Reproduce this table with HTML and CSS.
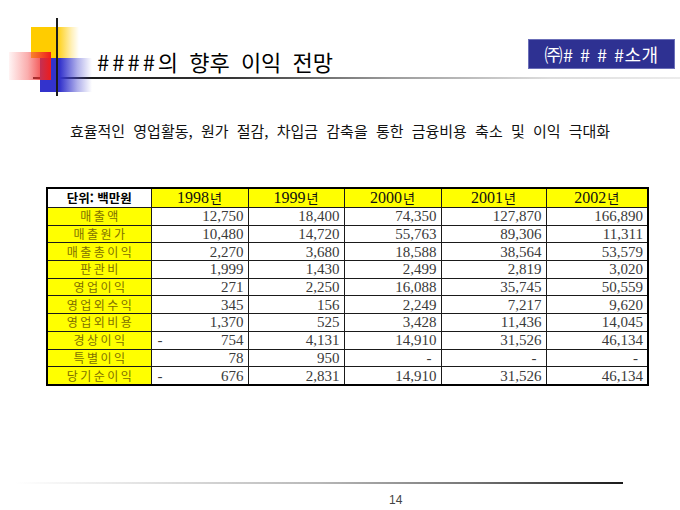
FILE: index.html
```html
<!DOCTYPE html>
<html lang="ko">
<head>
<meta charset="utf-8">
<title>####의 향후 이익 전망</title>
<link rel="stylesheet" href="styles.css">
</head>
<body>
<div class="slide">
  <header class="header">
    <div class="logo">
      <span class="sq sq-yellow"></span>
      <span class="sq sq-blue"></span>
      <span class="sq sq-red"></span>
      <span class="logo-vline"></span>
    </div>
    <div class="title-row">
      <h1 class="title"><span class="hashes">####</span>의 향후 이익 전망</h1>
      <div class="badge">㈜# # # #소개</div>
    </div>
    <div class="title-rule"></div>
  </header>

  <p class="subtitle">효율적인 영업활동, 원가 절감, 차입금 감축을 통한 금융비용 축소 및 이익 극대화</p>

  <table class="fin">
    <colgroup>
      <col class="c-label">
      <col class="c-98">
      <col class="c-99">
      <col class="c-00">
      <col class="c-01">
      <col class="c-02">
    </colgroup>
    <thead>
      <tr>
        <th class="unit">단위: 백만원</th>
        <th class="year">1998<span class="nyeon">년</span></th>
        <th class="year">1999<span class="nyeon">년</span></th>
        <th class="year">2000<span class="nyeon">년</span></th>
        <th class="year">2001<span class="nyeon">년</span></th>
        <th class="year">2002<span class="nyeon">년</span></th>
      </tr>
    </thead>
    <tbody>
      <tr><th>매출액</th><td>12,750</td><td>18,400</td><td>74,350</td><td>127,870</td><td>166,890</td></tr>
      <tr><th>매출원가</th><td>10,480</td><td>14,720</td><td>55,763</td><td>89,306</td><td>11,311</td></tr>
      <tr><th>매출총이익</th><td>2,270</td><td>3,680</td><td>18,588</td><td>38,564</td><td>53,579</td></tr>
      <tr><th>판관비</th><td>1,999</td><td>1,430</td><td>2,499</td><td>2,819</td><td>3,020</td></tr>
      <tr><th>영업이익</th><td>271</td><td>2,250</td><td>16,088</td><td>35,745</td><td>50,559</td></tr>
      <tr><th>영업외수익</th><td>345</td><td>156</td><td>2,249</td><td>7,217</td><td>9,620</td></tr>
      <tr><th>영업외비용</th><td>1,370</td><td>525</td><td>3,428</td><td>11,436</td><td>14,045</td></tr>
      <tr><th>경상이익</th><td><span class="neg">-</span>754</td><td>4,131</td><td>14,910</td><td>31,526</td><td>46,134</td></tr>
      <tr><th>특별이익</th><td>78</td><td>950</td><td class="dash">-</td><td class="dash">-</td><td class="dash">-</td></tr>
      <tr><th>당기순이익</th><td><span class="neg">-</span>676</td><td>2,831</td><td>14,910</td><td>31,526</td><td>46,134</td></tr>
    </tbody>
  </table>

  <footer class="footer">
    <div class="footer-rule"></div>
    <div class="page-num">14</div>
  </footer>
</div>
</body>
</html>
```
FILE: styles.css
```css
html, body {
  margin: 0;
  padding: 0;
  background: #ffffff;
}

.slide {
  width: 680px;
  height: 510px;
  display: flex;
  flex-direction: column;
  overflow: hidden;
  font-family: "Noto Sans CJK KR", "Noto Sans", sans-serif;
  color: #111;
}

/* ---------- header ---------- */
.header {
  position: relative;
  height: 80px;
  flex: none;
}

.logo {
  position: absolute;
  left: 0;
  top: 0;
  width: 100px;
  height: 100px;
}

.sq {
  position: absolute;
  display: block;
}

.sq-yellow {
  left: 31px;
  top: 27px;
  width: 48px;
  height: 31px;
  background: linear-gradient(to right, #ffcc00 0%, #ffcc00 52%, rgba(255, 214, 60, 0.35) 85%, rgba(255, 230, 120, 0) 100%);
}

.sq-blue {
  left: 40px;
  top: 58px;
  width: 52px;
  height: 34px;
  background: linear-gradient(to right, #3333cc 0%, #3333cc 38%, rgba(80, 80, 210, 0.45) 72%, rgba(120, 120, 230, 0) 100%);
}

.sq-red {
  left: 9px;
  top: 52px;
  width: 42px;
  height: 28px;
  background: linear-gradient(to right, rgba(255, 150, 150, 0.1) 0%, rgba(245, 90, 90, 0.5) 45%, #ee1c1c 100%);
}

.logo-vline {
  position: absolute;
  left: 56px;
  top: 18px;
  width: 2px;
  height: 78px;
  background: #1a1a1a;
}

.title-row {
  display: flex;
  justify-content: space-between;
  align-items: flex-start;
  box-sizing: border-box;
  height: 77px;
  padding: 39px 5px 0 97px;
}

.title {
  margin: 9px 0 0 0;
  font-size: 22px;
  line-height: 26px;
  font-weight: 400;
  color: #000;
  word-spacing: 5px;
  position: relative;
}

.hashes {
  letter-spacing: 3px;
}

.badge {
  width: 147px;
  height: 30px;
  box-sizing: border-box;
  background: #2e3192;
  color: #ffffff;
  font-size: 18px;
  line-height: 28px;
  text-align: center;
  letter-spacing: 0.5px;
  word-spacing: 1px;
  border: 1px solid #6b6fb8;
}

.title-rule {
  margin-left: 33px;
  height: 2px;
  background: linear-gradient(to right, #111 0%, #333 30%, #9a9a9a 55%, #dedede 80%, #ececec 100%);
}

/* ---------- subtitle ---------- */
.subtitle {
  flex: none;
  margin: 41px 0 0 0;
  font-size: 15px;
  line-height: 20px;
  text-align: center;
  word-spacing: 4px;
  color: #111;
}

/* ---------- table ---------- */
.fin {
  flex: none;
  margin: 46px 0 0 46px;
  width: 601px;
  border-collapse: collapse;
  border: 2px solid #000;
  table-layout: fixed;
}

.c-label { width: 104px; }
.c-98 { width: 97px; }
.c-99 { width: 96px; }
.c-00 { width: 97px; }
.c-01 { width: 105px; }
.c-02 { width: 102px; }

.fin th,
.fin td {
  padding: 0;
  border: 1px solid #1a1a1a;
  white-space: nowrap;
  overflow: hidden;
}

.fin thead th {
  height: 18px;
  line-height: 18px;
  background: #ffff00;
  font-weight: 400;
  font-size: 16px;
  color: #111;
  font-family: "Liberation Serif", serif;
  text-align: center;
}

.nyeon {
  font-family: "Noto Sans CJK KR", sans-serif;
  font-size: 13px;
  padding-left: 1px;
}

.fin thead th.unit {
  background: #ffffff;
  font-family: "Noto Sans CJK KR", sans-serif;
  font-weight: 700;
  font-size: 12.5px;
  color: #000;
}

.fin tbody th,
.fin tbody td {
  height: 16.7px;
  line-height: 16px;
}

.fin tbody th {
  background: #ffff00;
  color: #807000;
  font-weight: 400;
  font-size: 12px;
  letter-spacing: 2.5px;
  text-indent: 2.5px;
  text-align: center;
  font-family: "Noto Sans CJK KR", sans-serif;
}

.fin tbody td {
  text-align: right;
  padding-right: 4px;
  font-family: "Liberation Serif", serif;
  font-size: 15px;
  color: #3a3a3a;
}

.fin tbody td.dash {
  padding-right: 9px;
}

.neg {
  float: left;
  padding-left: 6px;
}

/* ---------- footer ---------- */
.footer {
  margin-top: auto;
  padding-bottom: 3px;
  flex: none;
}

.footer-rule {
  margin-left: 15px;
  width: 608px;
  height: 2px;
  background: linear-gradient(to right, rgba(230, 230, 230, 0) 0%, #e4e4e4 20%, #b8b8b8 50%, #777 75%, #1a1a1a 100%);
}

.page-num {
  margin-top: 9px;
  padding-left: 389px;
  font-family: "Liberation Sans", "Noto Sans", sans-serif;
  font-size: 12px;
  line-height: 14px;
  color: #444;
}
```
